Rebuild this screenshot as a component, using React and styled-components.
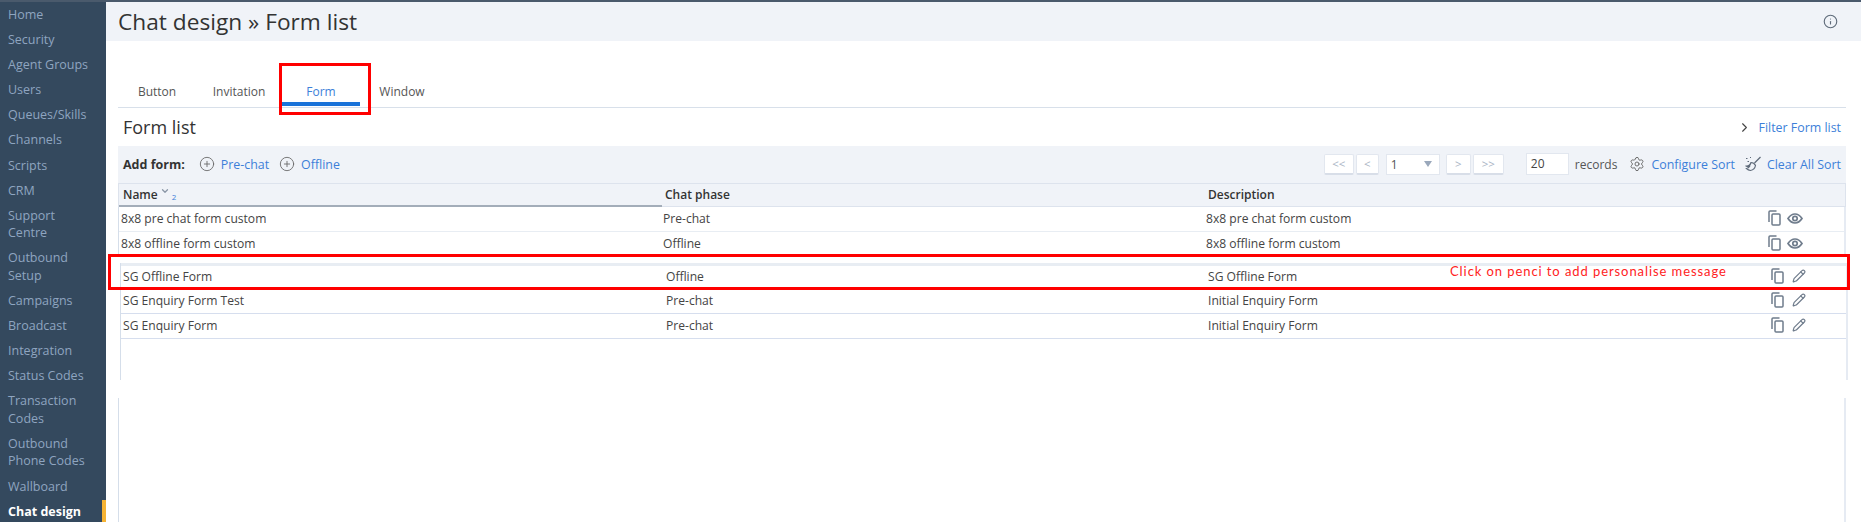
import React from 'react'
import styled, { createGlobalStyle } from 'styled-components'
import { Info, CirclePlus, ChevronRight, ChevronDown, Settings, Pencil } from 'lucide-react'

const GlobalStyle = createGlobalStyle`
  html, body { margin: 0; padding: 0; background: #fff; }
  body { font-family: "Open Sans", "Noto Sans", sans-serif; overflow: hidden; }
`

const Page = styled.div`
  display: flex;
  width: 1861px;
  height: 522px;
  border-top: 2px solid #4a5a6c;
  box-sizing: border-box;
  overflow: hidden;
`

const Sidebar = styled.nav`
  width: 106px;
  flex: none;
  background: #34495e;
  display: flex;
  flex-direction: column;
  padding-top: 1px;
`

const NavItem = styled.div`
  position: relative;
  padding: 3px 14px 4.6px 8px;
  font-size: 12.5px;
  line-height: 17.5px;
  color: ${p => (p.$active ? '#fff' : '#8fa5c0')};
  font-weight: ${p => (p.$active ? 700 : 400)};
  white-space: ${p => (p.$active ? 'nowrap' : 'normal')};
  ${p => p.$active && `
    &::after {
      content: '';
      position: absolute;
      right: 0;
      top: 0;
      bottom: -10px;
      width: 4px;
      background: #f5b335;
    }
  `}
`

const Main = styled.main`
  flex: 1;
  min-width: 0;
`

const Header = styled.header`
  height: 39px;
  background: #f0f3f8;
  display: flex;
  align-items: center;
  justify-content: space-between;
  padding: 0 23px 0 12px;
  color: #5f6b7a;
`

const Title = styled.h1`
  margin: 0;
  font-size: 22.7px;
  font-weight: 400;
  color: #333;
`

const Content = styled.div`
  padding: 0 15px 0 12px;
`

const Tabs = styled.div`
  display: flex;
  height: 67px;
  box-sizing: border-box;
  align-items: flex-end;
  border-bottom: 1px solid #d8e0ea;
`

const Tab = styled.div`
  position: relative;
  width: ${p => p.$w}px;
  height: 30px;
  box-sizing: border-box;
  padding-top: 5px;
  text-align: center;
  font-size: 12px;
  line-height: 20px;
  color: ${p => (p.$active ? '#3d7fd9' : '#555')};
  ${p => p.$active && `
    &::after {
      content: '';
      position: absolute;
      left: 0;
      right: 0;
      bottom: 1px;
      height: 4px;
      background: #1a73d9;
    }
  `}
`

const TabMark = styled.span`
  position: absolute;
  left: -3px;
  right: -11px;
  top: -14px;
  bottom: -8px;
  border: 3px solid #f00;
`

const ListHead = styled.div`
  height: 38px;
  display: flex;
  align-items: center;
  justify-content: space-between;
  padding: 0 5px 0 5px;
`

const ListTitle = styled.h2`
  margin: 0;
  font-size: 18px;
  font-weight: 400;
  color: #333;
`

const LinkText = styled.span`
  font-size: 12.4px;
  color: #3d7fd9;
  white-space: nowrap;
`

const FilterLink = styled.div`
  display: flex;
  align-items: center;
  gap: 7px;
  color: #444;
`

const Toolbar = styled.div`
  height: 37px;
  box-sizing: border-box;
  background: #f0f3f8;
  display: flex;
  align-items: center;
  padding: 0 5px 1px 5px;
  color: #666;
`

const AddLabel = styled.b`
  font-size: 12.5px;
  font-weight: 700;
  color: #333;
  margin-right: 14px;
`

const IconLink = styled.div`
  display: flex;
  align-items: center;
  gap: ${p => p.$inner || 6}px;
  margin-left: ${p => p.$gap || 0}px;
`

const Spacer = styled.div`
  flex: 1;
`

const PageBtn = styled.div`
  width: ${p => p.$w}px;
  height: 21px;
  box-sizing: border-box;
  margin-left: ${p => p.$gap}px;
  background: #fff;
  border: 1px solid #e2e7ef;
  border-bottom: 2px solid #d8dee8;
  border-radius: 2px;
  display: flex;
  align-items: center;
  justify-content: center;
  font-size: 11.5px;
  color: #a9b4c4;
`

const PageSelect = styled.div`
  width: 54px;
  height: 21px;
  margin-left: 7px;
  background: #fff;
  border: 1px solid #e2e7ef;
  display: flex;
  align-items: center;
  justify-content: space-between;
  padding: 0 7px 0 4px;
  box-sizing: border-box;
  font-size: 12px;
  color: #555;
`

const Caret = styled.span`
  border-left: 4px solid transparent;
  border-right: 4px solid transparent;
  border-top: 6px solid #9aa8bb;
`

const SizeInput = styled.div`
  width: 43px;
  height: 22px;
  margin-left: 22px;
  background: #fff;
  border: 1px solid #e2e7ef;
  box-sizing: border-box;
  padding-left: 4px;
  font-size: 12px;
  line-height: 20px;
  color: #444;
`

const Records = styled.span`
  margin-left: 6px;
  font-size: 12px;
  color: #555;
`

const HeadRow = styled.div`
  display: grid;
  grid-template-columns: 543px 543px 1fr;
  height: 23px;
  background: #f0f3f8;
  border: 1px solid #dde3ed;
  border-bottom: none;
`

const HeadCell = styled.div`
  padding-left: ${p => p.$pad}px;
  font-size: 12px;
  font-weight: 600;
  line-height: 21px;
  color: #333;
  display: flex;
  align-items: flex-start;
  border-bottom: ${p => (p.$sorted ? '2px solid #a3adb9' : '1px solid #dde3ed')};
`

const SortMark = styled.span`
  display: inline-flex;
  align-items: flex-start;
  margin-left: 2px;
  padding-top: 2px;
  color: #8a96a6;
`

const SortNum = styled.span`
  font-size: 8px;
  font-weight: 400;
  line-height: 11px;
  margin: 7px 0 0 2px;
  color: #3d7fd9;
`

const Rows = styled.div`
  border-left: 1px solid #d5deea;
  border-right: 2px solid #e6ebf3;
  margin-left: ${p => p.$offset || 0}px;
  margin-top: ${p => p.$top || 0}px;
  margin-right: ${p => (p.$offset ? -2 : 0)}px;
  padding-bottom: ${p => p.$tail || 0}px;
`

const Row = styled.div`
  position: relative;
  display: grid;
  grid-template-columns: 543px 543px 1fr 76px;
  height: ${p => p.$h || 25}px;
  align-items: center;
  box-sizing: border-box;
  border-bottom: 1px solid ${p => p.$line || '#d6deee'};
  ${p => p.$top && 'border-top: 3px solid #e8edf3;'}
  font-size: 12.1px;
  color: #444;
`

const Cell = styled.div`
  padding-left: ${p => p.$pad}px;
  padding-bottom: 2px;
`

const Actions = styled.div`
  display: flex;
  align-items: center;
  gap: ${p => (p.$edit ? 8 : 6)}px;
  padding-left: ${p => (p.$edit ? 1 : 0)}px;
  padding-bottom: 2px;
  color: #6f7c8c;
`

const RowMark = styled.span`
  position: absolute;
  left: -13px;
  right: -4px;
  top: -12px;
  bottom: -2px;
  border: 3px solid #f00;
  pointer-events: none;
`

const Note = styled.span`
  position: absolute;
  left: 1329px;
  top: -3px;
  font-family: Lato, sans-serif;
  font-size: 13px;
  letter-spacing: 0.92px;
  line-height: 16px;
  color: #f22;
`

const Lower = styled.div`
  height: 130px;
  margin-top: 18px;
  border-left: 1px solid #d5deea;
  border-right: 2px solid #e6ebf3;
`

const CopyIcon = () => (
  <svg width="13" height="16" viewBox="0 0 13 16" fill="none" stroke="currentColor" strokeWidth="1.5">
    <path d="M1 12V2a1 1 0 0 1 1-1h6.500" />
    <rect x="4" y="4" width="8" height="11" rx="1" />
  </svg>
)

const EyeIcon = () => (
  <svg width="16" height="11" viewBox="0 0 16 11" fill="none" stroke="currentColor" strokeWidth="1.7">
    <path d="M1 5.500C3 2.500 5 1 8 1s5 1.500 7 4.500c-2 3-4 4.500-7 4.500S3 8.500 1 5.500z" />
    <circle cx="8" cy="5.500" r="2.200" />
  </svg>
)

const BroomIcon = () => (
  <svg width="17" height="16" viewBox="0 0 17 16" fill="none" stroke="#5f6b7a" strokeWidth="1.2">
    <path d="M15.500 1 9.500 7" />
    <path d="M6 6.500c1.500 0 3.500 1 4.500 3-.5 2.500-2.500 4.500-5 5-1.500-.2-3-1-4-2 1.500-.2 2.500-1 3-2-1 .3-2 .2-3-.3C3.500 10 5.500 8.500 6 6.500z" />
    <path d="M1 2.500h1.500M2.500 5.500h1.500M5 1.500h1" />
  </svg>
)

const navItems = [
  'Home', 'Security', 'Agent Groups', 'Users', 'Queues/Skills', 'Channels', 'Scripts', 'CRM',
  'Support Centre', 'Outbound Setup', 'Campaigns', 'Broadcast', 'Integration', 'Status Codes',
  'Transaction Codes', 'Outbound Phone Codes', 'Wallboard',
]

const tabs = [
  { label: 'Button', w: 78 },
  { label: 'Invitation', w: 86 },
  { label: 'Form', w: 78, active: true },
  { label: 'Window', w: 84 },
]

const builtIn = [
  ['8x8 pre chat form custom', 'Pre-chat', '8x8 pre chat form custom'],
  ['8x8 offline form custom', 'Offline', '8x8 offline form custom'],
]

const custom = [
  ['SG Enquiry Form Test', 'Pre-chat', 'Initial Enquiry Form'],
  ['SG Enquiry Form', 'Pre-chat', 'Initial Enquiry Form'],
]

const RowActions = ({ edit }) => (
  <Actions $edit={edit}>
    <CopyIcon />
    {edit ? <Pencil size={14} strokeWidth={2} /> : <EyeIcon />}
  </Actions>
)

const App = () => (
  <>
    <GlobalStyle />
    <Page>
      <Sidebar>
        {navItems.map(item => <NavItem key={item}>{item}</NavItem>)}
        <NavItem $active>Chat design</NavItem>
      </Sidebar>
      <Main>
        <Header>
          <Title>Chat design » Form list</Title>
          <Info size={15} strokeWidth={1.8} />
        </Header>
        <Content>
          <Tabs>
            {tabs.map(t => (
              <Tab key={t.label} $w={t.w} $active={t.active}>
                {t.label}
                {t.active && <TabMark />}
              </Tab>
            ))}
          </Tabs>
          <ListHead>
            <ListTitle>Form list</ListTitle>
            <FilterLink>
              <ChevronRight size={15} strokeWidth={1.8} />
              <LinkText>Filter Form list</LinkText>
            </FilterLink>
          </ListHead>
          <Toolbar>
            <AddLabel>Add form:</AddLabel>
            <IconLink>
              <CirclePlus size={16} strokeWidth={1.3} />
              <LinkText>Pre-chat</LinkText>
            </IconLink>
            <IconLink $gap={10}>
              <CirclePlus size={16} strokeWidth={1.3} />
              <LinkText>Offline</LinkText>
            </IconLink>
            <Spacer />
            <PageBtn $w={30} $gap={0}>&lt;&lt;</PageBtn>
            <PageBtn $w={23} $gap={2}>&lt;</PageBtn>
            <PageSelect>1<Caret /></PageSelect>
            <PageBtn $w={25} $gap={6}>&gt;</PageBtn>
            <PageBtn $w={31} $gap={2}>&gt;&gt;</PageBtn>
            <SizeInput>20</SizeInput>
            <Records>records</Records>
            <IconLink $gap={12}>
              <Settings size={16} strokeWidth={1.4} />
              <LinkText>Configure Sort</LinkText>
            </IconLink>
            <IconLink $gap={10} $inner={5}>
              <BroomIcon />
              <LinkText>Clear All Sort</LinkText>
            </IconLink>
          </Toolbar>
          <HeadRow>
            <HeadCell $sorted $pad={4}>
              Name
              <SortMark><ChevronDown size={10} strokeWidth={3} /></SortMark>
              <SortNum>2</SortNum>
            </HeadCell>
            <HeadCell $pad={3}>Chat phase</HeadCell>
            <HeadCell $pad={3}>Description</HeadCell>
          </HeadRow>
          <Rows>
            {builtIn.map(r => (
              <Row key={r[0]} $line="#e8edf3">
                <Cell $pad={2}>{r[0]}</Cell>
                <Cell $pad={1}>{r[1]}</Cell>
                <Cell $pad={1}>{r[2]}</Cell>
                <RowActions />
              </Row>
            ))}
          </Rows>
          <Rows $offset={2} $top={6} $tail={41}>
            <Row $h={26} $top>
              <Cell $pad={2}>SG Offline Form</Cell>
              <Cell $pad={2}>Offline</Cell>
              <Cell $pad={1}>SG Offline Form</Cell>
              <RowActions edit />
              <Note>Click on penci to add personalise message</Note>
              <RowMark />
            </Row>
            {custom.map(r => (
              <Row key={r[0]}>
                <Cell $pad={2}>{r[0]}</Cell>
                <Cell $pad={2}>{r[1]}</Cell>
                <Cell $pad={1}>{r[2]}</Cell>
                <RowActions edit />
              </Row>
            ))}
          </Rows>
          <Lower />
        </Content>
      </Main>
    </Page>
  </>
)

export default App
